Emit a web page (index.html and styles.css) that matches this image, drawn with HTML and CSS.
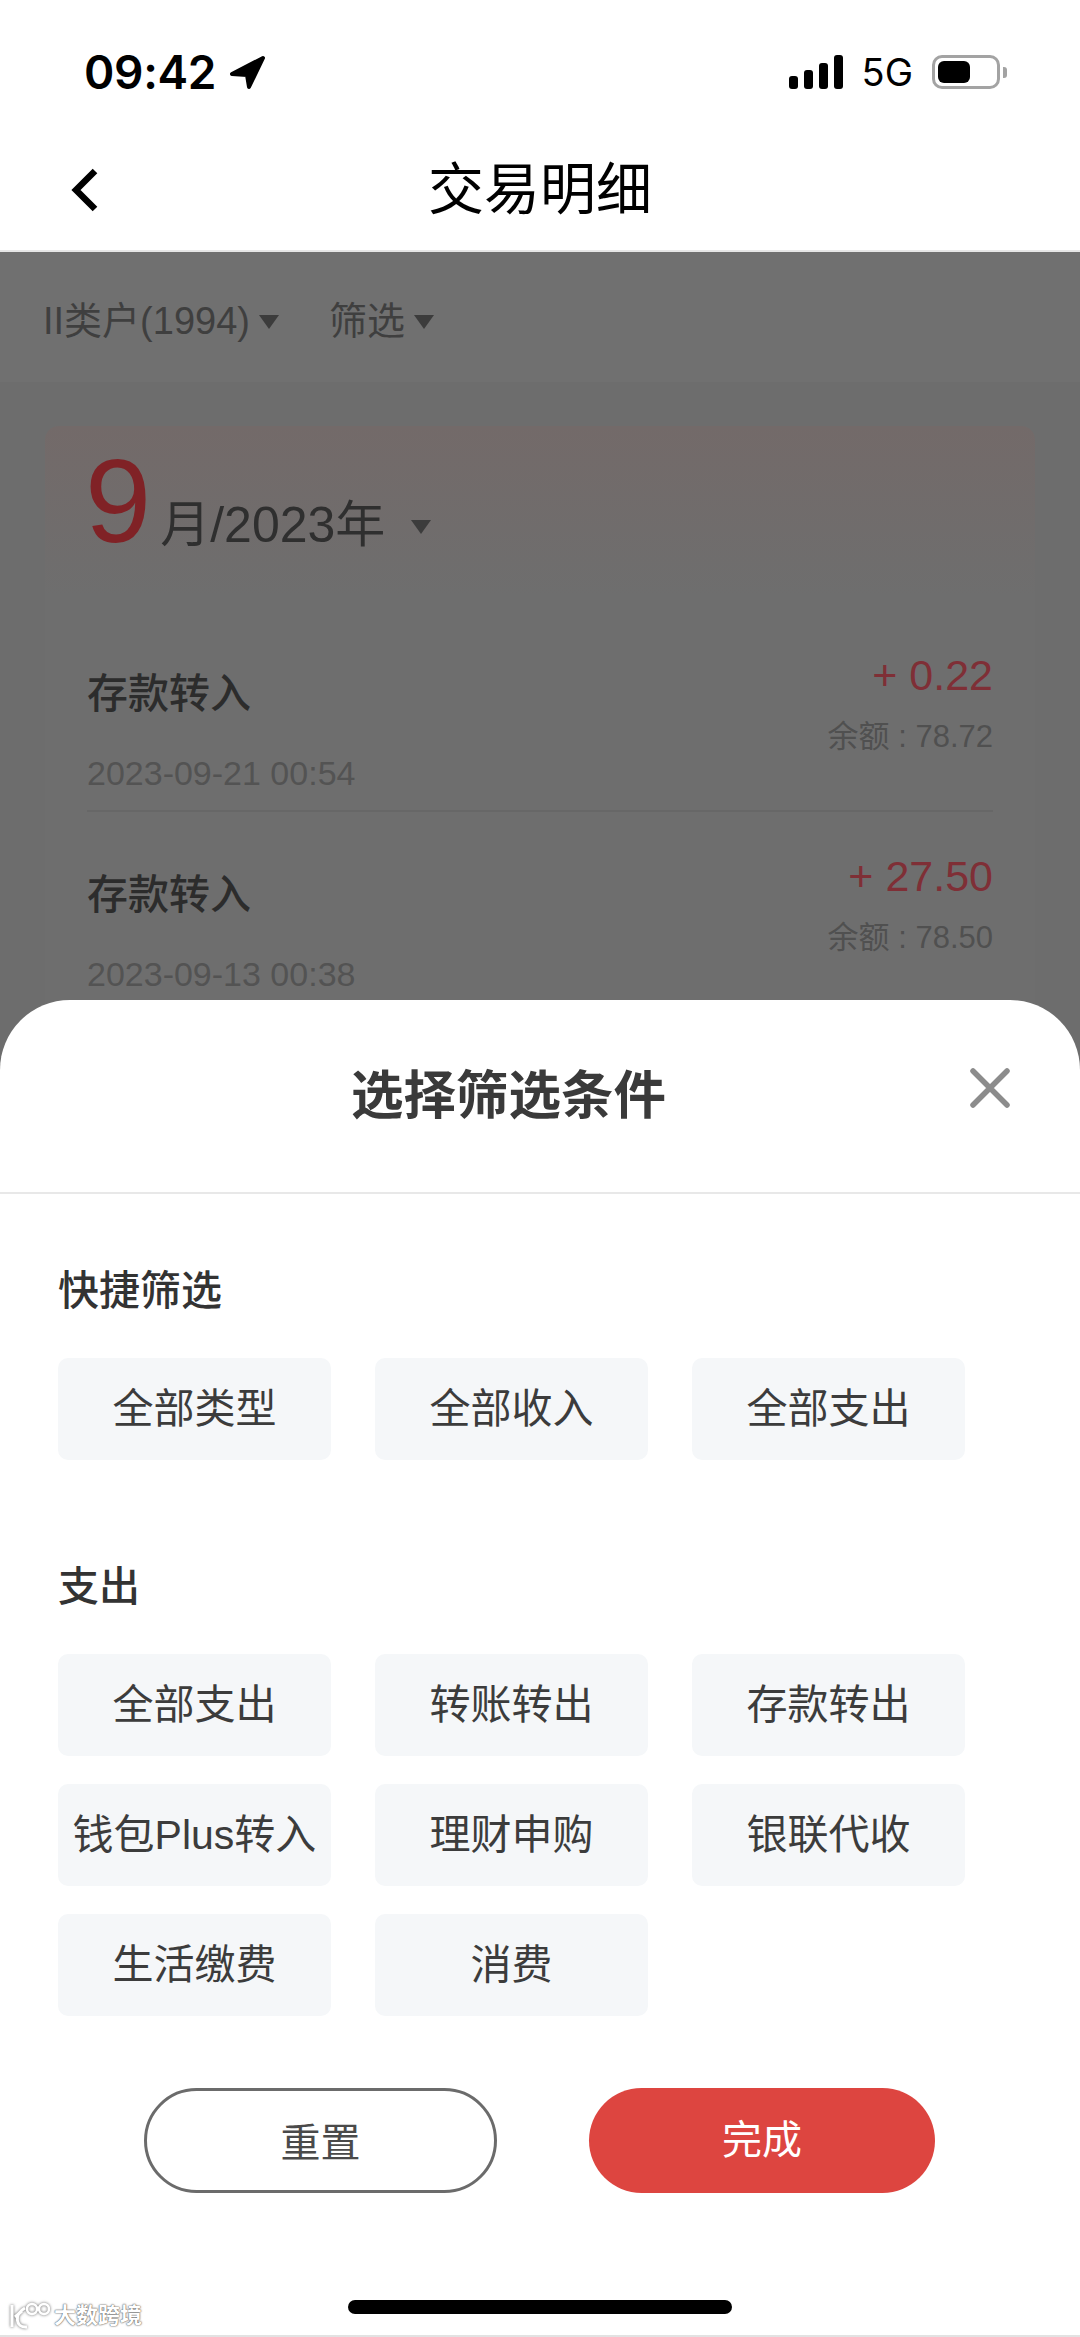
FILE: index.html
```html
<!DOCTYPE html>
<html lang="zh-CN">
<head>
  <meta charset="UTF-8" />
  <meta name="viewport" content="width=device-width, initial-scale=1.0"/>
  <title>交易明细</title>
  <link rel="stylesheet" href="styles.css">
</head>
<body>

  <div class="status-bar">
    <div class="status-left">
      <span class="clock">09:42</span>
      <svg class="location" viewBox="0 0 37 35"><path d="M34 3 L3 19 L18 20 L20 32 Z" fill="#000" stroke="#000" stroke-width="4" stroke-linejoin="round"/></svg>
    </div>
    <div class="status-right">
      <div class="signal"><i class="s1"></i><i class="s2"></i><i class="s3"></i><i class="s4"></i></div>
      <span class="network">5G</span>
      <div class="battery"><div class="battery-level"></div></div>
      <div class="battery-nub"></div>
    </div>
  </div>

  <div class="nav-bar">
    <svg class="back" viewBox="0 0 27 44"><path d="M24 3 L5 22 L24 41" fill="none" stroke="#000" stroke-width="6.5"/></svg>
    <h1 class="nav-title">交易明细</h1>
  </div>

  <div class="filter-bar">
    <span class="filter">II类户(1994)<i class="caret"></i></span>
    <span class="filter">筛选<i class="caret"></i></span>
  </div>

  <div class="month-card">
    <div class="month-head">
      <span class="month-num">9</span>
      <span class="month-rest">月/2023年</span>
      <i class="caret caret-month"></i>
    </div>

    <div class="tx-row tx-first">
      <div class="tx-left">
        <div class="tx-name">存款转入</div>
        <div class="tx-date">2023-09-21 00:54</div>
      </div>
      <div class="tx-right">
        <div class="tx-amount">+ 0.22</div>
        <div class="tx-balance">余额 : 78.72</div>
      </div>
    </div>
    <div class="tx-row">
      <div class="tx-left">
        <div class="tx-name">存款转入</div>
        <div class="tx-date">2023-09-13 00:38</div>
      </div>
      <div class="tx-right">
        <div class="tx-amount">+ 27.50</div>
        <div class="tx-balance">余额 : 78.50</div>
      </div>
    </div>
  </div>

  <div class="sheet">
    <div class="sheet-head">
      <h2 class="sheet-title">选择筛选条件</h2>
      <svg class="close" viewBox="0 0 40 40"><path d="M3 3 L37 37 M37 3 L3 37" stroke="#8c8c8c" stroke-width="5.5" stroke-linecap="round"/></svg>
    </div>

    <div class="sheet-body">
      <h3 class="group-title">快捷筛选</h3>
      <div class="chips">
        <div class="chip">全部类型</div>
        <div class="chip">全部收入</div>
        <div class="chip">全部支出</div>
      </div>

      <h3 class="group-title group-second">支出</h3>
      <div class="chips">
        <div class="chip">全部支出</div>
        <div class="chip">转账转出</div>
        <div class="chip">存款转出</div>
        <div class="chip">钱包Plus转入</div>
        <div class="chip">理财申购</div>
        <div class="chip">银联代收</div>
        <div class="chip">生活缴费</div>
        <div class="chip">消费</div>
      </div>

      <div class="actions">
        <div class="btn btn-reset">重置</div>
        <div class="btn btn-done">完成</div>
      </div>
    </div>

    <div class="home-bar"></div>

    <div class="watermark">
      <svg class="wm-logo" viewBox="0 0 42 28"><path d="M4 3 V25 M17 6 C6 12 7 26 19 25 M7 15 L14 9" fill="none" stroke="#fff" stroke-width="3"/><circle cx="24" cy="7" r="5" fill="none" stroke="#fff" stroke-width="2.5"/><circle cx="36" cy="7" r="5" fill="none" stroke="#fff" stroke-width="2.5"/></svg>
      <span class="wm-text">大数跨境</span>
    </div>
  </div>

</body>
</html>
```

FILE: styles.css
```css
* {
  box-sizing: border-box;
}
body {
  position: relative;
  width: 1080px;
  height: 2337px;
  margin: 0;
  overflow: hidden;
  font-family: 'Liberation Sans', 'Noto Sans CJK SC', sans-serif;
  background-color: #6d6d6d;
}
h1, h2, h3 {
  margin: 0;
}

/* status bar */
.status-bar {
  display: flex;
  justify-content: space-between;
  align-items: center;
  height: 144px;
  padding: 0 73px 0 84px;
  background-color: #fff;
  color: #000;
}
.status-left {
  display: flex;
  align-items: center;
  gap: 13px;
}
.clock {
  font-family: Inter, sans-serif;
  font-size: 46px;
  font-weight: 600;
  line-height: 50px;
  letter-spacing: -0.3px;
}
.location {
  width: 37px;
  height: 35px;
}
.status-right {
  display: flex;
  align-items: center;
}
.signal {
  display: flex;
  align-items: flex-end;
  gap: 6px;
  height: 34px;
}
.signal i {
  width: 9px;
  background-color: #000;
  border-radius: 3px;
}
.s1 { height: 13px; }
.s2 { height: 19px; }
.s3 { height: 26px; }
.s4 { height: 34px; }
.network {
  margin-left: 19px;
  font-family: Inter, sans-serif;
  font-size: 38px;
  font-weight: 400;
  line-height: 40px;
}
.battery {
  width: 68px;
  height: 34px;
  margin-left: 19px;
  padding: 3px;
  border: 3px solid #a3a3a3;
  border-radius: 10px;
}
.battery-level {
  width: 32px;
  height: 100%;
  background-color: #000;
  border-radius: 6px;
}
.battery-nub {
  width: 4px;
  height: 11px;
  margin-left: 3px;
  background-color: #a3a3a3;
  border-radius: 0 3px 3px 0;
}

/* nav */
.nav-bar {
  position: relative;
  display: flex;
  justify-content: center;
  align-items: center;
  height: 108px;
  padding-bottom: 14px;
  background-color: #fff;
  border-bottom: 2px solid #e6e6e6;
}
.back {
  position: absolute;
  left: 71px;
  top: 24px;
  width: 27px;
  height: 44px;
}
.nav-title {
  font-size: 56px;
  font-weight: 400;
  line-height: 70px;
  color: #000;
}

/* dimmed page under the sheet */
.filter-bar {
  display: flex;
  align-items: center;
  gap: 50px;
  height: 130px;
  padding: 7px 0 0 43px;
  background-color: #707070;
}
.filter {
  display: flex;
  align-items: center;
  font-size: 38px;
  line-height: 50px;
  color: #3f3f3f;
}
.caret {
  display: inline-block;
  width: 0;
  height: 0;
  margin: 2px 0 0 9px;
  border-style: solid;
  border-width: 14px 10px 0;
  border-color: #3c3c3c transparent transparent;
}
.month-card {
  height: 700px;
  margin: 44px 45px 0;
  padding: 0 42px 0 42px;
  border-radius: 14px;
  background: linear-gradient(#736a69, #6e6e6e 170px);
}
.month-head {
  display: flex;
  align-items: baseline;
  padding-top: 12px;
}
.month-num {
  margin-left: -2px;
  font-size: 119px;
  line-height: 126px;
  color: #802226;
}
.month-rest {
  margin-left: 9px;
  font-size: 50px;
  color: #2f2f2f;
}
.caret-month {
  align-self: center;
  margin: 52px 0 0 26px;
}
.tx-row {
  display: flex;
  justify-content: space-between;
  height: 201px;
  padding-top: 40px;
}
.tx-first {
  height: 161px;
  margin-top: 87px;
  padding-top: 0;
  border-bottom: 2px solid #676767;
}
.tx-name {
  margin-top: 15px;
  font-size: 41px;
  font-weight: 500;
  line-height: 56px;
  color: #2c2c2c;
}
.tx-date {
  margin-top: 31px;
  font-size: 34px;
  line-height: 40px;
  color: #535353;
}
.tx-right {
  text-align: right;
}
.tx-amount {
  font-size: 43px;
  line-height: 48px;
  color: #7f2f36;
}
.tx-balance {
  margin-top: 18px;
  font-size: 31px;
  line-height: 40px;
  color: #505050;
}

/* bottom sheet */
.sheet {
  position: absolute;
  left: 0;
  right: 0;
  top: 1000px;
  bottom: 0;
  background-color: #fff;
  border-radius: 70px 70px 0 0;
  border-bottom: 2px solid #e2e2e2;
}
.sheet-head {
  display: flex;
  align-items: center;
  height: 194px;
  padding: 0 70px 0 351px;
  border-bottom: 2px solid #e8e8e8;
}
.sheet-title {
  font-size: 52.5px;
  font-weight: 700;
  line-height: 70px;
  color: #3a3a3a;
}
.close {
  width: 40px;
  height: 40px;
  margin: -16px 0 0 auto;
}
.sheet-body {
  padding: 69px 0 0 58px;
}
.group-title {
  font-size: 41px;
  font-weight: 500;
  line-height: 56px;
  color: #333;
}
.group-second {
  margin-top: 99px;
}
.chips {
  display: grid;
  grid-template-columns: repeat(3, 273px);
  column-gap: 44px;
  row-gap: 28px;
  margin-top: 39px;
}
.chip {
  display: flex;
  justify-content: center;
  align-items: center;
  height: 102px;
  padding-bottom: 8px;
  border-radius: 10px;
  background-color: #f5f7f9;
  font-size: 41px;
  color: #3c3c3c;
  white-space: nowrap;
}
.actions {
  display: flex;
  gap: 92px;
  margin-top: 72px;
  padding-left: 86px;
}
.btn {
  display: flex;
  justify-content: center;
  align-items: center;
  height: 105px;
  border-radius: 53px;
  font-size: 40px;
}
.btn-reset {
  width: 353px;
  padding-bottom: 2px;
  border: 3px solid #6b6b6b;
  color: #4a4a4a;
}
.btn-done {
  width: 346px;
  padding-bottom: 8px;
  background-color: #dd4540;
  color: #fff;
}
.home-bar {
  position: absolute;
  left: 348px;
  top: 1300px;
  width: 384px;
  height: 14px;
  border-radius: 7px;
  background-color: #000;
}
.watermark {
  position: absolute;
  left: 8px;
  top: 1302px;
  display: flex;
  align-items: center;
  gap: 4px;
}
.wm-logo {
  width: 42px;
  height: 28px;
  filter: drop-shadow(0 0 1.5px #666);
}
.wm-text {
  font-size: 22px;
  font-weight: 700;
  line-height: 28px;
  color: #fff;
  text-shadow: 0 0 2px #555, 0 0 1px #555;
}
```
